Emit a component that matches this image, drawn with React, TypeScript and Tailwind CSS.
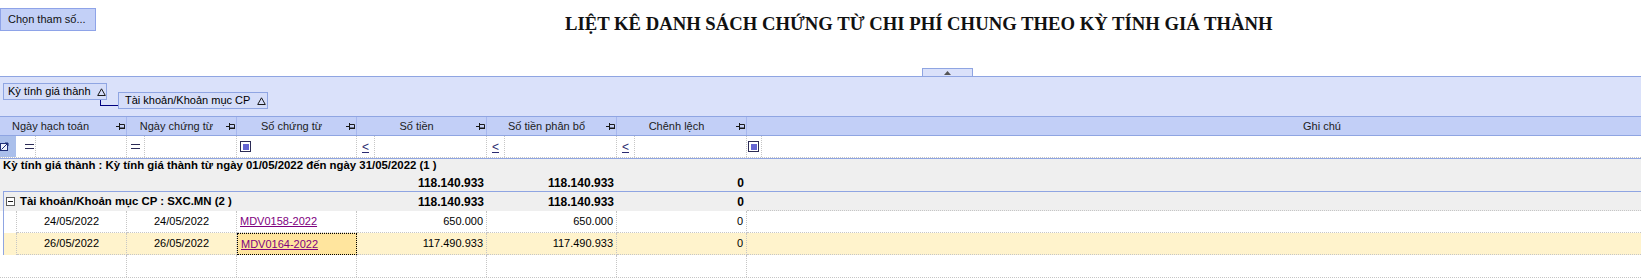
import React from 'react';

// column widths (px) for the grid, last one runs off screen
const cols = [
  { label: 'Ngày hạch toán', w: 'w-[127px]', shift: 'pr-[15px]' },
  { label: 'Ngày chứng từ', w: 'w-[110px]', shift: '' },
  { label: 'Số chứng từ', w: 'w-[120px]', shift: '' },
  { label: 'Số tiền', w: 'w-[130px]', shift: '' },
  { label: 'Số tiền phân bổ', w: 'w-[130px]', shift: '' },
  { label: 'Chênh lệch', w: 'w-[130px]', shift: '' },
];

const rows = [
  { d1: '24/05/2022', d2: '24/05/2022', no: 'MDV0158-2022', amt: '650.000', alloc: '650.000', diff: '0', selected: false },
  { d1: '26/05/2022', d2: '26/05/2022', no: 'MDV0164-2022', amt: '117.490.933', alloc: '117.490.933', diff: '0', selected: true },
];

function Pin() {
  return (
    <svg width="9" height="7" viewBox="0 0 9 7" className="shrink-0">
      <path d="M0 3.5h3M3.5 0v7" stroke="#1a1a1a" fill="none" />
      <path d="M3.5 1.5h5v3.5h-5" stroke="#1a1a1a" fill="none" />
      <path d="M3.5 5.5h5.5" stroke="#1a1a1a" fill="none" />
    </svg>
  );
}

function SortTri() {
  return (
    <svg width="9" height="8" viewBox="0 0 9 8" className="shrink-0">
      <path d="M4.5 0.8L8.3 7.5H0.7Z" stroke="#1a1a1a" fill="none" />
    </svg>
  );
}

function CheckBox() {
  return (
    <div className="flex h-[11px] w-[11px] items-center justify-center border border-[#2b2b55] bg-white">
      <div className="h-[6px] w-[6px] bg-[#6464d2]" />
    </div>
  );
}

function Op({ kind }: { kind: 'eq' | 'le' | 'chk' }) {
  if (kind === 'chk') return <CheckBox />;
  if (kind === 'eq')
    return (
      <svg width="9" height="5" viewBox="0 0 9 5">
        <path d="M0 0.5h9M0 4.5h9" stroke="#2a2a55" />
      </svg>
    );
  return <span className="text-[12px] leading-none text-[#2a2a70] underline">&lt;</span>;
}

export default function App() {
  const dot = 'border-dotted border-[#c6c6c6]';
  return (
    <div className="h-[279px] w-[1641px] overflow-hidden bg-white font-['Liberation_Sans',Arial,sans-serif] text-[11px] text-black">
      {/* Top: parameter button + title */}
      <div className="flex h-[76px] flex-col">
        <div className="flex h-[68px]">
          <button className="mt-[8px] h-[23px] w-[96px] border border-[#8ea3e8] bg-[#c3d0f7] pl-[7px] text-left text-[11px] text-[#111]">
            Chọn tham số...
          </button>
          <h1 className="ml-[469px] mt-[13px] whitespace-nowrap font-['Liberation_Serif','Times_New_Roman',serif] text-[18.7px] font-bold leading-[22px] text-[#111]">
            LIỆT KÊ DANH SÁCH CHỨNG TỪ CHI PHÍ CHUNG THEO KỲ TÍNH GIÁ THÀNH
          </h1>
        </div>
        <div className="ml-[922px] flex h-[8px] w-[51px] items-center justify-center border border-b-0 border-[#8fa5e2] bg-[#dae1fa]">
          <svg width="7" height="4" viewBox="0 0 7 4">
            <path d="M3.5 0L7 4H0Z" fill="#555" />
          </svg>
        </div>
      </div>

      {/* Group by panel */}
      <div className="flex h-[40px] items-start border-t border-[#8fa5e2] bg-[#dae1fa]">
        <div className="ml-[3px] mt-[6px] flex h-[17px] w-[104px] items-center gap-[6px] border border-[#8fa5e2] bg-[#d5ddf9] pl-[4px]">
          <span>Kỳ tính giá thành</span>
          <SortTri />
        </div>
        <div className="-ml-[7px] mt-[23px] h-[6px] w-[18px] border-b border-l border-[#000080]" />
        <div className="mt-[15px] flex h-[17px] w-[150px] items-center gap-[7px] border border-[#8fa5e2] bg-[#d5ddf9] pl-[6px]">
          <span>Tài khoản/Khoản mục CP</span>
          <SortTri />
        </div>
      </div>

      {/* Column headers */}
      <div className="flex h-[20px] border-y border-[#8fa5e2] bg-[#c2cff7] text-[#1c1c1c]">
        {cols.map((c) => (
          <div key={c.label} className={`flex h-full shrink-0 items-center border-r border-[#a6b7ee] ${c.w}`}>
            <span className={`flex-1 text-center ${c.shift}`}>{c.label}</span>
            <Pin />
            <span className="w-[1px]" />
          </div>
        ))}
        <div className="flex h-full w-[1150px] shrink-0 items-center justify-center">Ghi chú</div>
      </div>

      {/* Auto filter row */}
      <div className={`flex h-[22px] border-b ${dot}`}>
        <div className="flex w-[127px] shrink-0">
          <div className="flex w-[16px] items-center bg-[#aabfeb]">
            <svg width="9" height="9" viewBox="0 0 9 9">
              <rect x="0.5" y="1.5" width="7" height="7" fill="#eef2fd" stroke="#1f2f78" />
              <path d="M1.5 7.5L8 1M5 1h3v3" stroke="#1f2f78" fill="none" />
            </svg>
          </div>
          <div className={`flex w-[20px] items-center border-r pl-[9px] ${dot}`}>
            <Op kind="eq" />
          </div>
          <div className={`flex-1 border-r ${dot}`} />
        </div>
        <div className={`flex w-[110px] shrink-0 border-r ${dot}`}>
          <div className={`flex w-[18px] items-center border-r pl-[4px] ${dot}`}>
            <Op kind="eq" />
          </div>
        </div>
        <div className={`flex w-[120px] shrink-0 border-r ${dot}`}>
          <div className="flex w-[18px] items-center pl-[3px]">
            <Op kind="chk" />
          </div>
        </div>
        {[0, 1, 2].map((i) => (
          <div key={i} className={`flex w-[130px] shrink-0 border-r ${dot}`}>
            <div className={`flex w-[18px] items-center border-r pl-[5px] ${dot}`}>
              <Op kind="le" />
            </div>
          </div>
        ))}
        <div className="flex w-[1150px] shrink-0">
          <div className={`flex w-[15px] items-center border-r pl-[1px] ${dot}`}>
            <Op kind="chk" />
          </div>
        </div>
      </div>

      {/* Group: Kỳ tính giá thành */}
      <div className="flex h-[33px] flex-col border-t border-[#8fa5e2] bg-[#efefef] font-bold">
        <div className="flex h-[15px] items-end whitespace-nowrap pl-[3px] text-[11.4px]">
          Kỳ tính giá thành : Kỳ tính giá thành từ ngày 01/05/2022 đến ngày 31/05/2022 (1 )
        </div>
        <div className="flex h-[17px] items-center text-[12px]">
          <div className="w-[357px] shrink-0" />
          <div className="w-[130px] shrink-0 pr-[3px] text-right">118.140.933</div>
          <div className="w-[130px] shrink-0 pr-[3px] text-right">118.140.933</div>
          <div className="w-[130px] shrink-0 pr-[3px] text-right">0</div>
        </div>
      </div>

      {/* Sub group: Tài khoản/Khoản mục CP */}
      <div className="flex">
        <div className="flex w-[3px] shrink-0 flex-col">
          <div className="h-[20px] bg-[#efefef]" />
          <div className="flex-1 bg-white" />
        </div>
        <div className="flex-1 border-l border-[#8fa5e2]">
          <div className="flex h-[20px] border-t border-[#8fa5e2] bg-[#efefef] font-bold">
            <div className="flex w-[353px] shrink-0 items-center">
              <svg width="9" height="9" viewBox="0 0 9 9" className="ml-[2px]">
                <rect x="0.5" y="0.5" width="8" height="8" fill="#fff" stroke="#5a5a5a" />
                <path d="M2 4.5h5" stroke="#1a1a1a" />
              </svg>
              <span className="ml-[5px] whitespace-nowrap text-[11.4px]">Tài khoản/Khoản mục CP : SXC.MN (2 )</span>
            </div>
            <div className="flex w-[130px] shrink-0 items-center justify-end pr-[3px] text-[12px]">118.140.933</div>
            <div className="flex w-[130px] shrink-0 items-center justify-end pr-[3px] text-[12px]">118.140.933</div>
            <div className="flex w-[130px] shrink-0 items-center justify-end pr-[3px] text-[12px]">0</div>
            <div className={`flex-1 border-b ${dot}`} />
          </div>
          {rows.map((r) => {
            const bg = r.selected ? 'bg-[#fff3cc]' : 'bg-white';
            return (
              <div key={r.no} className={`flex h-[22px] ${bg}`}>
                <div className={`w-[13px] shrink-0 border-r ${dot}`} />
                <div className={`flex w-[110px] shrink-0 items-center justify-center border-r border-b ${dot}`}>{r.d1}</div>
                <div className={`flex w-[110px] shrink-0 items-center justify-center border-r border-b ${dot}`}>{r.d2}</div>
                <div
                  className={`flex w-[120px] shrink-0 items-center pl-[3px] ${
                    r.selected ? 'border border-dotted border-black bg-[#ffe59e]' : `border-r border-b ${dot}`
                  }`}
                >
                  <span className="text-[#800080] underline">{r.no}</span>
                </div>
                <div className={`flex w-[130px] shrink-0 items-center justify-end border-r border-b pr-[3px] ${dot}`}>{r.amt}</div>
                <div className={`flex w-[130px] shrink-0 items-center justify-end border-r border-b pr-[3px] ${dot}`}>{r.alloc}</div>
                <div className={`flex w-[130px] shrink-0 items-center justify-end border-r border-b pr-[3px] ${dot}`}>{r.diff}</div>
                <div className={`flex-1 border-b ${dot}`} />
              </div>
            );
          })}
        </div>
      </div>

      {/* Empty new row area */}
      <div className={`flex h-[23px] border-b ${dot}`}>
        <div className={`w-[127px] shrink-0 border-r ${dot}`} />
        <div className={`w-[110px] shrink-0 border-r ${dot}`} />
        <div className={`w-[120px] shrink-0 border-r ${dot}`} />
        <div className={`w-[130px] shrink-0 border-r ${dot}`} />
        <div className={`w-[130px] shrink-0 border-r ${dot}`} />
        <div className={`w-[130px] shrink-0 border-r ${dot}`} />
        <div className="flex-1" />
      </div>
    </div>
  );
}
